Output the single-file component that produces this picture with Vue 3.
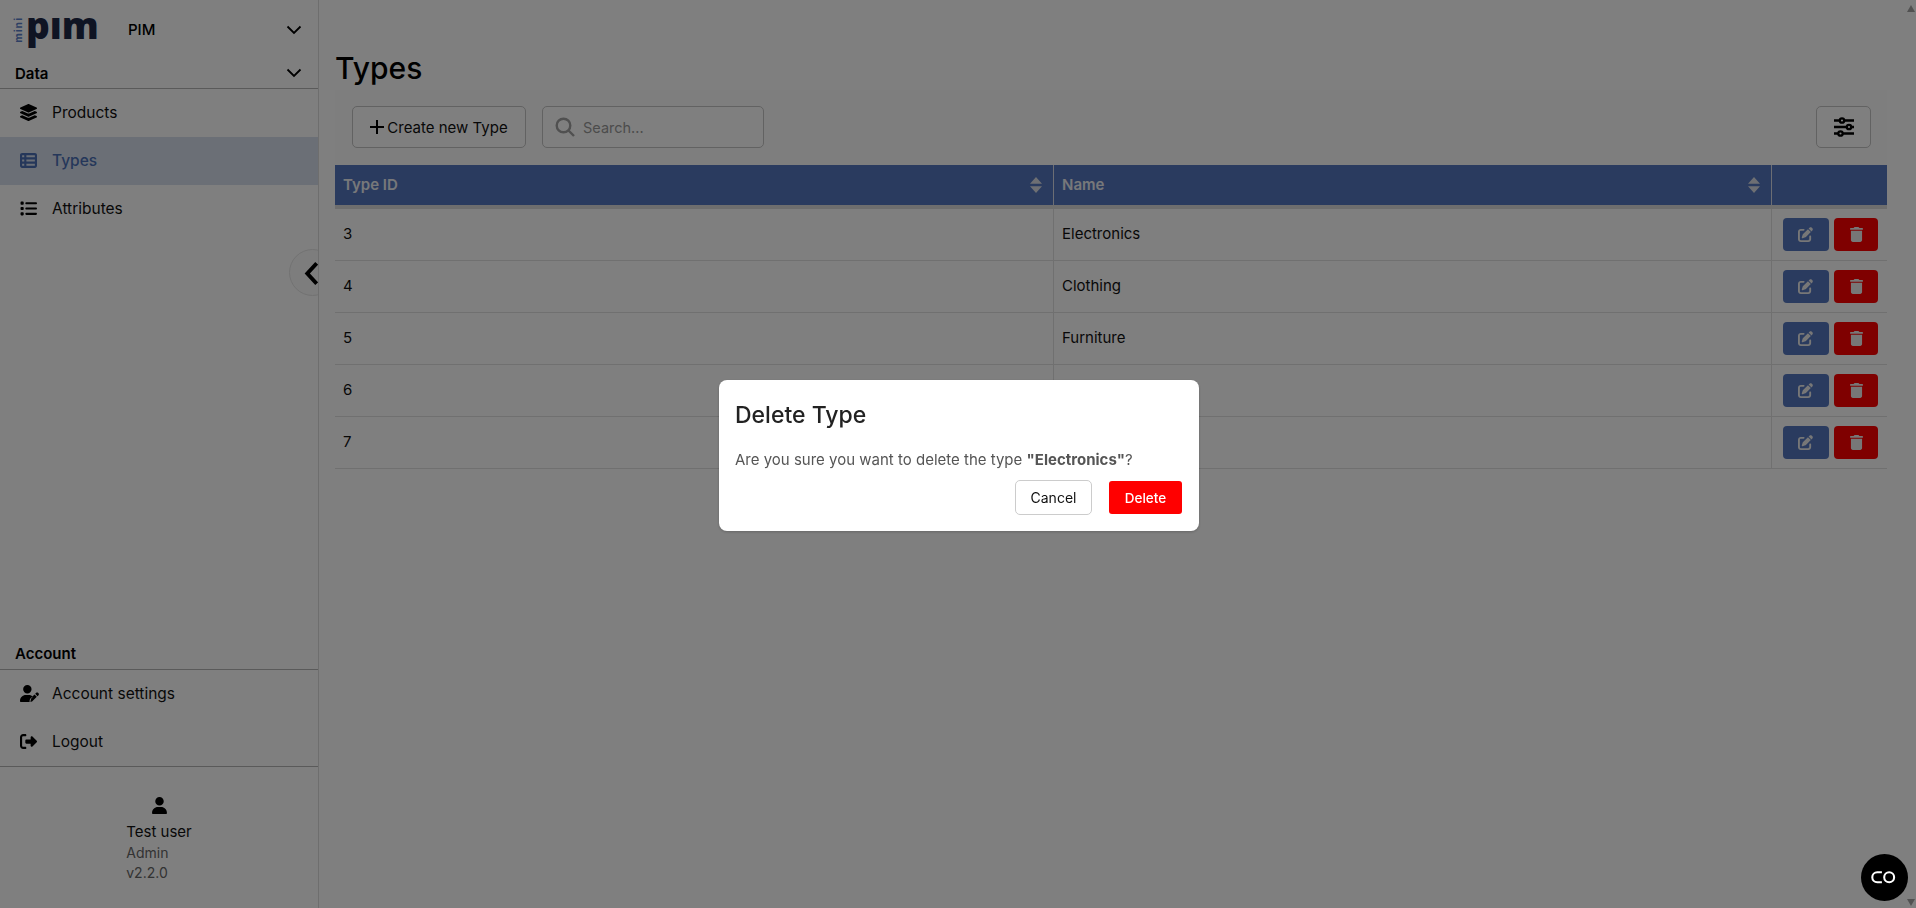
<script setup>
const rows = [
  { id: 3, name: 'Electronics' },
  { id: 4, name: 'Clothing' },
  { id: 5, name: 'Furniture' },
  { id: 6, name: 'Books' },
  { id: 7, name: 'Toys' },
]
</script>

<template>
  <div class="page">
    <aside class="sidebar">
      <div class="brand">
        <div class="logo">
          <span class="logo-mini">mini</span>
          <span class="logo-pim">pım</span>
        </div>
        <span class="brand-name">PIM</span>
        <svg class="chev" viewBox="0 0 16 16"><path d="M1.500 4.500 8 11l6.500-6.500" /></svg>
      </div>
      <div class="section-head data-head">
        <span>Data</span>
        <svg class="chev" viewBox="0 0 16 16"><path d="M1.500 4.500 8 11l6.500-6.500" /></svg>
      </div>
      <nav class="nav">
        <a class="nav-item">
          <svg class="nav-icon" viewBox="0 0 512 512"><path d="M232.500 5.200c14.900-6.900 32.100-6.900 47 0l218.600 101c8.500 3.900 13.900 12.400 13.900 21.800s-5.400 17.900-13.900 21.800l-218.600 101c-14.900 6.900-32.100 6.900-47 0L13.900 149.800C5.400 145.800 0 137.300 0 128s5.400-17.900 13.900-21.800L232.500 5.200zM444.900 209.600l53.200 24.600c8.500 3.900 13.900 12.400 13.900 21.800s-5.400 17.900-13.900 21.800l-218.600 101c-14.900 6.900-32.100 6.900-47 0L13.900 277.800C5.400 273.800 0 265.300 0 256s5.400-17.900 13.900-21.800l53.200-24.600 152 70.200c23.400 10.800 50.400 10.800 73.800 0l152-70.200zm-152 198.200l152-70.200 53.200 24.600c8.500 3.900 13.900 12.400 13.900 21.800s-5.400 17.900-13.900 21.800l-218.600 101c-14.900 6.900-32.100 6.900-47 0L13.900 405.800C5.400 401.800 0 393.300 0 384s5.400-17.900 13.900-21.800l53.200-24.600 152 70.200c23.400 10.800 50.400 10.800 73.800 0z" /></svg>
          <span>Products</span>
        </a>
        <a class="nav-item active">
          <svg class="nav-icon" viewBox="0 0 512 512"><path d="M64 32C28.700 32 0 60.700 0 96v320c0 35.300 28.700 64 64 64h384c35.300 0 64-28.700 64-64V96c0-35.300-28.700-64-64-64H64zm0 64h64v64H64V96zm128 0h256v64H192V96zM64 224h64v64H64v-64zm128 0h256v64H192v-64zM64 352h64v64H64v-64zm128 0h256v64H192v-64z" /></svg>
          <span>Types</span>
        </a>
        <a class="nav-item">
          <svg class="nav-icon" viewBox="0 0 512 512"><path d="M40 48C26.700 48 16 58.700 16 72v48c0 13.300 10.700 24 24 24h48c13.300 0 24-10.700 24-24V72c0-13.300-10.700-24-24-24H40zm152 16c-17.700 0-32 14.300-32 32s14.300 32 32 32h288c17.700 0 32-14.300 32-32s-14.300-32-32-32H192zm0 160c-17.700 0-32 14.300-32 32s14.300 32 32 32h288c17.700 0 32-14.300 32-32s-14.300-32-32-32H192zm0 160c-17.700 0-32 14.300-32 32s14.300 32 32 32h288c17.700 0 32-14.300 32-32s-14.300-32-32-32H192zM16 232v48c0 13.300 10.700 24 24 24h48c13.300 0 24-10.700 24-24v-48c0-13.300-10.700-24-24-24H40c-13.300 0-24 10.700-24 24zm24 136c-13.300 0-24 10.700-24 24v48c0 13.300 10.700 24 24 24h48c13.300 0 24-10.700 24-24v-48c0-13.300-10.700-24-24-24H40z" /></svg>
          <span>Attributes</span>
        </a>
      </nav>
      <div class="collapse-btn">
        <svg viewBox="0 0 20 32"><path d="M16 3 4 16l12 13" /></svg>
      </div>

      <div class="section-head account-head"><span>Account</span></div>
      <nav class="nav nav-account">
        <a class="nav-item">
          <svg class="nav-icon wide" viewBox="0 0 640 512"><path d="M224 256a128 128 0 1 0 0-256 128 128 0 1 0 0 256zm-45.700 48C79.800 304 0 383.800 0 482.300 0 498.700 13.300 512 29.700 512h293.100c-3.100-8.800-3.700-18.400-1.400-27.800l15-60.100c2.800-11.300 8.600-21.500 16.800-29.700l40.300-40.300c-32.100-31-75.700-50.100-123.900-50.100h-91.400zM549.800 235.700l14.400 14.400c15.600 15.600 15.600 40.900 0 56.600l-29.400 29.400-71-71 29.400-29.400c15.600-15.600 40.900-15.600 56.600 0zM311.900 417 441.100 287.800l71 71L382.900 487.900c-4.100 4.100-9.200 7-14.900 8.400l-60.100 15c-5.500 1.400-11.200-.2-15.200-4.200s-5.600-9.700-4.200-15.200l15-60.100c1.400-5.600 4.300-10.800 8.400-14.900z" /></svg>
          <span>Account settings</span>
        </a>
        <a class="nav-item">
          <svg class="nav-icon" viewBox="0 0 512 512"><path d="M502.600 278.600c12.500-12.500 12.500-32.800 0-45.300l-128-128c-9.200-9.200-22.900-11.900-34.900-6.900S320 115.100 320 128v64H192c-17.700 0-32 14.300-32 32v64c0 17.700 14.300 32 32 32h128v64c0 12.900 7.800 24.600 19.800 29.600s25.700 2.200 34.900-6.900l128-128zM160 96c17.700 0 32-14.300 32-32s-14.300-32-32-32H96C43 32 0 75 0 128v256c0 53 43 96 96 96h64c17.700 0 32-14.300 32-32s-14.300-32-32-32H96c-17.700 0-32-14.300-32-32V128c0-17.700 14.300-32 32-32h64z" /></svg>
          <span>Logout</span>
        </a>
      </nav>
      <div class="user">
        <svg class="user-icon" viewBox="0 0 448 512"><path d="M224 256a128 128 0 1 0 0-256 128 128 0 1 0 0 256zm-45.700 48C79.800 304 0 383.800 0 482.300 0 498.700 13.300 512 29.700 512h388.600c16.400 0 29.700-13.300 29.700-29.700C448 383.800 368.200 304 269.700 304h-91.400z" /></svg>
        <div class="user-text">
          <div class="user-name">Test user</div>
          <div class="user-sub">Admin</div>
          <div class="user-sub">v2.2.0</div>
        </div>
      </div>
    </aside>

    <main class="main">
      <h1 class="title">Types</h1>
      <div class="toolbar">
        <button class="btn-create">
          <svg class="plus" viewBox="0 0 14 14"><path d="M7 0v14M0 7h14" /></svg>
          Create new Type
        </button>
        <div class="search">
          <svg viewBox="0 0 20 20"><circle cx="8.500" cy="8.500" r="6.800" /><path d="m13.500 13.500 5.500 5.500" /></svg>
          <span>Search...</span>
        </div>
        <button class="btn-filter">
          <svg viewBox="0 0 24 24">
            <path d="M2 5.500h20M2 12h20M2 18.500h20" />
            <circle cx="10" cy="5.500" r="2.200" />
            <circle cx="17" cy="12" r="2.200" />
            <circle cx="8.500" cy="18.500" r="2.200" />
          </svg>
        </button>
      </div>
      <div class="table">
        <div class="thead">
          <div class="th">Type ID
            <svg class="sort" viewBox="0 0 12 16"><path d="M6 0 12 6.800H0zM6 16 0 9.200h12z" /></svg>
          </div>
          <div class="th">Name
            <svg class="sort" viewBox="0 0 12 16"><path d="M6 0 12 6.800H0zM6 16 0 9.200h12z" /></svg>
          </div>
          <div class="th"></div>
        </div>
        <div class="tbody">
          <div v-for="row in rows" :key="row.id" class="tr">
            <div class="td">{{ row.id }}</div>
            <div class="td">{{ row.name }}</div>
            <div class="td actions">
              <button class="act edit">
                <svg viewBox="0 0 512 512"><path d="M471.600 21.700c-21.900-21.900-57.300-21.900-79.200 0l-30.100 30 97.900 97.900 30.100-30.100c21.900-21.900 21.900-57.300 0-79.200l-18.700-18.600zM172.400 241.700c-6.100 6.100-10.800 13.600-13.500 21.900l-29.600 88.800c-2.900 8.600-.6 18.100 5.800 24.600s15.900 8.700 24.600 5.800l88.800-29.600c8.200-2.700 15.700-7.400 21.900-13.500l167.300-167.500-97.900-97.900-167.400 167.400zM96 64C43 64 0 107 0 160v256c0 53 43 96 96 96h256c53 0 96-43 96-96v-96c0-17.700-14.300-32-32-32s-32 14.300-32 32v96c0 17.700-14.300 32-32 32H96c-17.700 0-32-14.300-32-32V160c0-17.700 14.300-32 32-32h96c17.700 0 32-14.300 32-32s-14.300-32-32-32H96z" /></svg>
              </button>
              <button class="act del">
                <svg viewBox="0 0 448 512"><path d="M135.200 17.700C140.600 6.800 151.700 0 163.800 0h120.400c12.100 0 23.200 6.800 28.600 17.700L320 32h96c17.700 0 32 14.300 32 32s-14.300 32-32 32H32C14.300 96 0 81.700 0 64s14.300-32 32-32h96l7.200-14.300zM32 128h384v320c0 35.300-28.700 64-64 64H96c-35.300 0-64-28.700-64-64V128z" /></svg>
              </button>
            </div>
          </div>
        </div>
      </div>
    </main>
    <div class="scrollbar">
      <i class="arrow up"></i>
      <i class="arrow down"></i>
    </div>
  </div>

  <div class="overlay">
    <div class="modal">
      <h2 class="modal-title">Delete Type</h2>
      <p class="modal-text">Are you sure you want to delete the type <b>"Electronics"</b>?</p>
      <div class="modal-actions">
        <button class="m-cancel">Cancel</button>
        <button class="m-delete">Delete</button>
      </div>
    </div>
  </div>

  <div class="chat-fab">
    <svg viewBox="0 0 28 14"><path d="M11.500 2.200H7a4.800 4.800 0 0 0 0 9.600h4.500" /><circle cx="18.500" cy="7" r="4.800" /></svg>
  </div>
</template>

<style>
html, body {
  margin: 0;
  background: #fff;
  overflow: hidden;
}
</style>

<style scoped>
.page {
  display: flex;
  height: 908px;
  font-family: Inter, "Noto Sans", sans-serif;
  color: #111;
  background: #fff;
}

button {
  font-family: inherit;
}

.sidebar {
  position: relative;
  flex: none;
  width: 318px;
  border-right: 1px solid #ddd;
  display: flex;
  flex-direction: column;
}

.brand {
  display: flex;
  align-items: center;
  height: 58px;
  padding: 0 15px;
}

.logo {
  display: flex;
  align-items: center;
  width: 96px;
  height: 40px;
}

.logo-mini {
  writing-mode: vertical-rl;
  transform: rotate(180deg);
  font-size: 10.500px;
  font-weight: 700;
  letter-spacing: 1px;
  color: #5a7fc8;
  line-height: 8px;
  margin-right: 3px;
  margin-top: 1px;
}

.logo-pim {
  font-family: "Open Sans", sans-serif;
  font-size: 37px;
  font-weight: 800;
  line-height: 40px;
  color: #1e2846;
  margin-top: -9px;
}

.brand-name {
  margin-left: 17px;
  font-size: 15px;
  font-weight: 500;
  color: #000;
}

.chev {
  width: 16px;
  height: 16px;
  fill: none;
  stroke: #000;
  stroke-width: 1.800;
  margin-left: auto;
  margin-right: 1px;
}

.brand .chev {
  margin-top: 2px;
}

.section-head {
  display: flex;
  align-items: center;
  padding: 0 15px;
  height: 30px;
  border-bottom: 1px solid #b5b5b5;
  font-size: 15px;
  font-weight: 600;
  color: #000;
}

.nav {
  display: flex;
  flex-direction: column;
}

.nav-item {
  display: flex;
  align-items: center;
  height: 48px;
  box-sizing: border-box;
  padding: 0 0 2px 20px;
  gap: 15px;
  font-size: 15.500px;
  color: #111;
}

.nav-item.active {
  background: #d6deec;
  color: #4a6fb5;
  font-weight: 500;
}

.nav-item.active .nav-icon {
  fill: #4a6fb5;
}

.nav-icon {
  width: 17px;
  height: 17px;
  flex: none;
  fill: #000;
}

.nav-icon.wide {
  width: 21px;
  margin-right: -4px;
}

.collapse-btn {
  position: absolute;
  left: 289px;
  top: 249px;
  width: 29px;
  height: 48px;
  overflow: hidden;
}

.collapse-btn::before {
  content: "";
  position: absolute;
  left: 0;
  top: 0;
  width: 45px;
  height: 45px;
  border: 1px solid #e4e4e4;
  border-radius: 50%;
  background: #fafafa;
}

.collapse-btn svg {
  position: absolute;
  left: 15px;
  top: 12px;
  width: 16px;
  height: 25px;
  fill: none;
  stroke: #000;
  stroke-width: 5;
}

.account-head {
  margin-top: auto;
  height: 32px;
}

.nav-account {
  border-bottom: 1px solid #b5b5b5;
}

.user {
  height: 141px;
  display: flex;
  flex-direction: column;
  align-items: center;
  padding-top: 30px;
  box-sizing: border-box;
}

.user-icon {
  width: 15px;
  height: 17px;
  fill: #000;
}

.user-text {
  margin-top: 6px;
}

.user-name {
  font-size: 15px;
  line-height: 23px;
  color: #111;
}

.user-sub {
  font-size: 14px;
  line-height: 20px;
  color: #666;
}

.main {
  flex: 1;
  min-width: 0;
  padding: 0 15px 0 16px;
}

.title {
  margin: 0 0 1px;
  padding-top: 48px;
  font-size: 30px;
  line-height: 41px;
  font-weight: 500;
  color: #000;
}

.toolbar {
  display: flex;
  align-items: flex-start;
  height: 75px;
  padding: 16px 16px 0 17px;
  box-sizing: border-box;
  gap: 16px;
  background: #fcfcfc;
}

.btn-create {
  height: 42px;
  width: 174px;
  padding: 0;
  border: 1px solid #c4c4c4;
  border-radius: 5px;
  background: #fff;
  font-size: 15px;
  color: #111;
  display: flex;
  align-items: center;
  justify-content: center;
  gap: 3px;
}

.plus {
  width: 14px;
  height: 14px;
  fill: none;
  stroke: #000;
  stroke-width: 2;
}

.search {
  display: flex;
  align-items: center;
  gap: 8px;
  width: 222px;
  height: 42px;
  padding-left: 12px;
  box-sizing: border-box;
  border: 1px solid #c4c4c4;
  border-radius: 5px;
  font-size: 14.500px;
  color: #999;
  background: #fff;
}

.search svg {
  width: 20px;
  height: 20px;
  fill: none;
  stroke: #a0a0a0;
  stroke-width: 2.400;
}

.btn-filter {
  margin-left: auto;
  width: 55px;
  height: 42px;
  display: flex;
  align-items: center;
  justify-content: center;
  padding: 0;
  border: 1px solid #c4c4c4;
  border-radius: 5px;
  background: #fff;
}

.btn-filter svg {
  width: 24px;
  height: 24px;
  fill: #fff;
  stroke: #000;
  stroke-width: 2.300;
}

.table {
  font-size: 15px;
}

.thead {
  display: grid;
  grid-template-columns: 1fr 1fr 116px;
  height: 40px;
  background: #5476bf;
  box-shadow: 0 4px 0 #ddd;
  color: #eef0f5;
  font-weight: 600;
}

.th {
  display: flex;
  align-items: center;
  justify-content: space-between;
  padding: 0 11px 1px 8px;
}

.th + .th {
  border-left: 1px solid #d8dde8;
}

.sort {
  width: 12px;
  height: 16px;
  fill: #dcdfe6;
}

.tbody {
  padding-top: 4px;
}

.tr {
  display: grid;
  grid-template-columns: 1fr 1fr 116px;
  height: 52px;
  box-sizing: border-box;
  border-bottom: 1px solid #e0e0e0;
}

.td {
  display: flex;
  align-items: center;
  padding: 0 0 2px 8px;
  color: #111;
}

.td + .td {
  border-left: 1px solid #e0e0e0;
}

.actions {
  padding: 0 0 0 11px;
  gap: 5px;
}

.act {
  height: 33px;
  display: flex;
  align-items: center;
  justify-content: center;
  padding: 0;
  border: none;
  border-radius: 4px;
}

.act svg {
  fill: #eee;
}

.edit {
  width: 46px;
  background: #5476bf;
}

.edit svg {
  width: 15px;
  height: 15px;
  margin-left: -2px;
}

.del {
  width: 44px;
  background: #ff0000;
}

.del svg {
  width: 13px;
  height: 15px;
}

.scrollbar {
  position: relative;
  flex: none;
  width: 14px;
}

.arrow {
  position: absolute;
  left: 5px;
  width: 0;
  height: 0;
  border-left: 4.500px solid transparent;
  border-right: 4.500px solid transparent;
}

.arrow.up {
  top: 5px;
  border-bottom: 7px solid #a3a3a3;
}

.arrow.down {
  bottom: 2px;
  border-top: 7px solid #a3a3a3;
}

.overlay {
  position: fixed;
  inset: 0;
  background: rgba(0, 0, 0, 0.5);
  display: flex;
  justify-content: center;
  font-family: Inter, "Noto Sans", sans-serif;
}

.modal {
  align-self: flex-start;
  margin-top: 380px;
  margin-left: 2px;
  width: 480px;
  height: 151px;
  box-sizing: border-box;
  padding: 18px 17px 0 16px;
  background: #fff;
  border-radius: 8px;
  box-shadow: 0 1px 3px rgba(0, 0, 0, 0.2);
}

.modal-title {
  margin: 0;
  font-size: 23px;
  line-height: 34px;
  font-weight: 500;
  color: #222;
}

.modal-text {
  margin: 17px 0 0;
  font-size: 15px;
  line-height: 22px;
  color: #555;
}

.modal-actions {
  display: flex;
  justify-content: flex-end;
  align-items: center;
  gap: 17px;
  margin-top: 9px;
}

.m-cancel {
  width: 77px;
  height: 35px;
  padding: 0;
  background: #fff;
  border: 1px solid #ccc;
  border-radius: 5px;
  font-size: 14px;
  color: #111;
}

.m-delete {
  width: 73px;
  height: 33px;
  padding: 0;
  background: #ff0000;
  border: none;
  border-radius: 3px;
  font-size: 13.500px;
  font-weight: 500;
  color: #fff;
}

.chat-fab {
  position: fixed;
  right: 8px;
  bottom: 7px;
  width: 47px;
  height: 47px;
  border-radius: 50%;
  background: #000;
  display: flex;
  align-items: center;
  justify-content: center;
}

.chat-fab svg {
  width: 29px;
  height: 14.500px;
  fill: none;
  stroke: #fff;
  stroke-width: 2;
}
</style>
